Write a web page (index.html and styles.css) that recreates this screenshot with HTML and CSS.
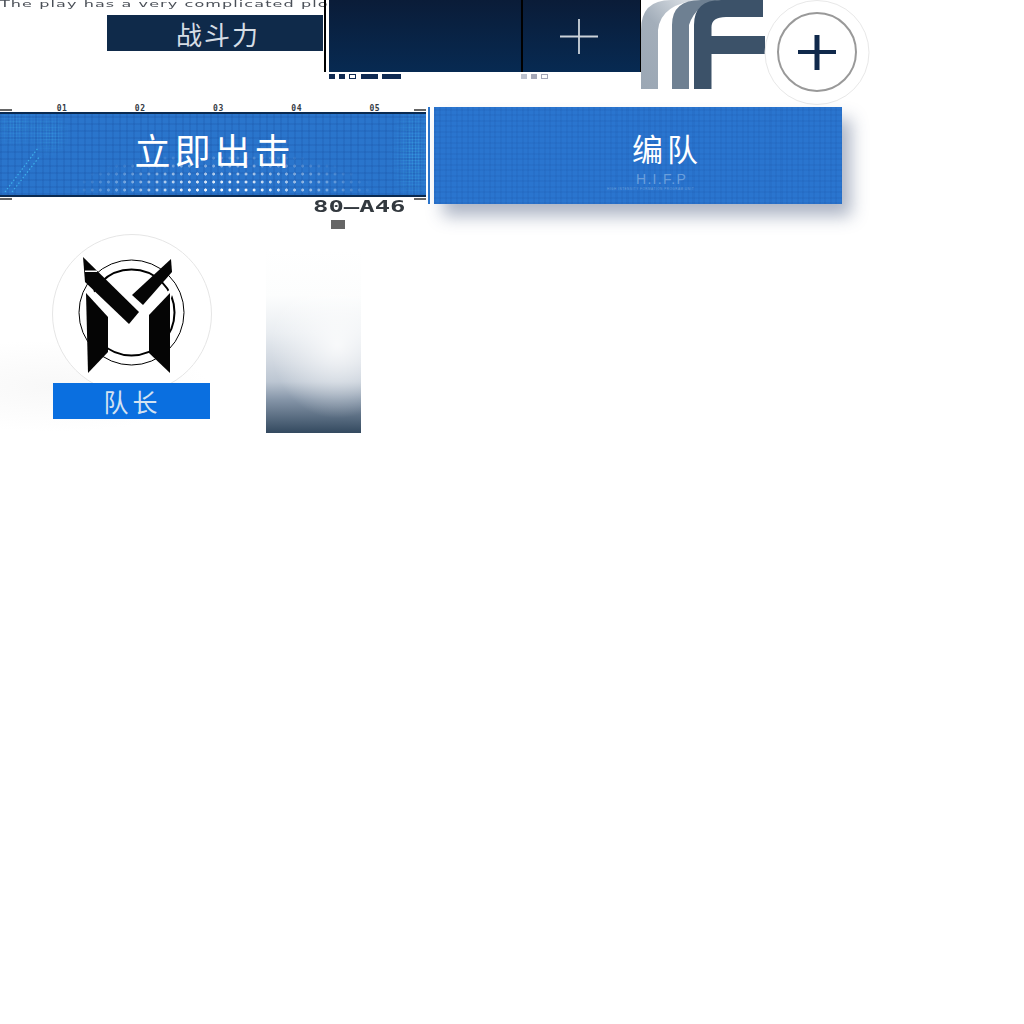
FILE: index.html
```html
<!DOCTYPE html>
<html lang="zh-CN">
<head>
  <meta charset="UTF-8">
  <title>HIFP UI sheet</title>
  <link rel="stylesheet" href="styles.css">
</head>
<body>
  <div class="sheet">
    <div class="tagline"><span>The play has a very complicated plo</span></div>

    <div class="power">战斗力</div>

    <div class="rule rule-a"></div>
    <div class="slots">
      <div class="slot slot-wide"></div>
      <div class="slot slot-add">
        <svg width="40" height="37" viewBox="0 0 40 37"><path d="M0 18.5H38M19 1V36" stroke="#ccd3da" stroke-width="1.8" fill="none"/></svg>
      </div>
    </div>

    <div class="pips pips-dark">
      <i></i><i></i><i class="hollow"></i><i class="bar-a"></i><i class="bar-b"></i>
    </div>
    <div class="pips pips-pale">
      <i></i><i class="mid"></i><i class="hollow"></i>
    </div>

    <svg class="logo-f" width="125" height="90" viewBox="0 0 125 90">
      <defs>
        <linearGradient id="fadeBand" x1="0" y1="1" x2="0.7" y2="0">
          <stop offset="0" stop-color="#9ba7b4"/>
          <stop offset="0.6" stop-color="#a3aeba"/>
          <stop offset="1" stop-color="#d4dae0"/>
        </linearGradient>
      </defs>
      <path d="M0 89V30Q0 0 30 0H60Q20 3 17 30V89Z" fill="url(#fadeBand)"/>
      <path d="M31 89V25Q31 0 60 0H80Q55 3 48 25V89Z" fill="#6e8092"/>
      <path d="M53 89V25Q53 0 80 0H122V17H85Q70 17 70.5 28V36H124V54H70.5V89Z" fill="#3c5269"/>
    </svg>

    <div class="add-round">
      <svg width="106" height="106" viewBox="0 0 106 106">
        <circle cx="53" cy="52.5" r="52" fill="#fff" stroke="#e8e8e8"/>
        <circle cx="53" cy="52" r="39" fill="none" stroke="#999" stroke-width="2"/>
        <path d="M34 52H72" stroke="#10294b" stroke-width="4" fill="none"/>
        <path d="M53 35V70" stroke="#10294b" stroke-width="5" fill="none"/>
      </svg>
    </div>

    <div class="ticks">
      <span>01</span><span>02</span><span>03</span><span>04</span><span>05</span>
    </div>
    <i class="dash dash-tl"></i><i class="dash dash-tr"></i>
    <i class="dash dash-bl"></i><i class="dash dash-br"></i>

    <div class="launch">
      <div class="launch-sparkle"></div>
      <svg class="launch-streak" width="40" height="50" viewBox="0 0 40 50">
        <path d="M3 48L36 4M10 48L38 12" stroke="#46c3f5" stroke-width="1.2" stroke-dasharray="1.5 2" opacity="0.75" fill="none"/>
      </svg>
      <div class="launch-dots"></div>
      <span class="launch-label">立即出击</span>
    </div>

    <div class="code">80–A46</div>
    <div class="code-mark"></div>

    <div class="rule rule-blue"></div>

    <div class="team">
      <span class="team-label">编队</span>
      <span class="team-sub">H.I.F.P</span>
      <span class="team-tiny">HIGH INTENSITY FORMATION PROGRAM UNIT</span>
    </div>

    <div class="smudge"></div>

    <div class="avatar">
      <svg width="162" height="162" viewBox="0 0 162 162">
        <circle cx="81" cy="81" r="79.5" fill="#fff" stroke="#e6e6e6"/>
        <circle cx="80.5" cy="79.5" r="52.5" fill="none" stroke="#000" stroke-width="1"/>
        <circle cx="80.5" cy="79.5" r="43" fill="none" stroke="#000" stroke-width="2"/>
        <path d="M36 52L70 84L52 118L36 52Z" fill="#fff"/>
        <path d="M124 52L92 80L104 118L124 52Z" fill="#fff"/>
        <path d="M32 24L88 79L78 91L34 49Z" fill="#050505"/>
        <path d="M34 37.5H46V39H34Z" fill="#fff"/>
        <path d="M120 26L121 39L92 72L81 62Z" fill="#050505"/>
        <path d="M35 60L57 84V119L37 140Z" fill="#050505"/>
        <path d="M119 60L98 82V120L119 140Z" fill="#050505"/>
      </svg>
    </div>
    <div class="captain">队长</div>

    <div class="fade-panel"></div>
  </div>
</body>
</html>
```

FILE: styles.css
```css
* {
  margin: 0;
  padding: 0;
  box-sizing: border-box;
}

body {
  background-color: #fff;
  font-family: "Noto Sans CJK SC", "Noto Sans", sans-serif;
}

/* sprite sheet: every piece sits at its own spot on the canvas */
.sheet {
  position: relative;
  width: 1024px;
  height: 1024px;
  overflow: hidden;
}

.tagline {
  position: absolute;
  left: 0;
  top: 0;
  height: 9px;
}

.tagline span {
  display: block;
  font-family: "DejaVu Sans", sans-serif;
  font-size: 8px;
  line-height: 9px;
  letter-spacing: 0.55px;
  color: #4a4f57;
  white-space: nowrap;
  transform: scaleX(2);
  transform-origin: left top;
}

.power {
  position: absolute;
  left: 107px;
  top: 15px;
  width: 216px;
  height: 36px;
  padding-left: 6px;
  background-color: #0f2a4a;
  color: #d5dde5;
  font-size: 26px;
  line-height: 37px;
  letter-spacing: 2px;
  text-align: center;
}

.rule {
  position: absolute;
}

.rule-a {
  left: 324px;
  top: 0;
  width: 2px;
  height: 72px;
  background-color: #000;
}

.rule-blue {
  left: 428px;
  top: 107px;
  width: 2px;
  height: 97px;
  background-color: #2a75cc;
}

.slots {
  position: absolute;
  left: 329px;
  top: 0;
  display: flex;
  width: 312px;
  height: 72px;
  border-right: 1.5px solid #000;
  background: linear-gradient(#0a1c38, #072a52);
}

.slot-wide {
  width: 194px;
  border-right: 2px solid #000;
}

.slot-add {
  flex: 1;
  display: flex;
  align-items: center;
  justify-content: center;
  padding-right: 3px;
}

.pips {
  position: absolute;
  top: 74px;
  display: flex;
  gap: 4px;
}

.pips i {
  display: block;
  width: 6px;
  height: 5px;
}

.pips .hollow {
  width: 7px;
  background: transparent;
}

.pips-dark {
  left: 329px;
}

.pips-dark i {
  background-color: #0f2a52;
}

.pips-dark .hollow {
  border: 1px solid #0f2a52;
  background: transparent;
}

.pips-dark .bar-a {
  width: 17px;
  margin-left: 1px;
}

.pips-dark .bar-b {
  width: 19px;
}

.pips-pale {
  left: 521px;
}

.pips-pale i {
  background-color: #bcc2ce;
}

.pips-pale .mid {
  background-color: #a5a8b8;
}

.pips-pale .hollow {
  border: 1px solid #a5a8b8;
  background: transparent;
}

.logo-f {
  position: absolute;
  left: 641px;
  top: 0;
}

.add-round {
  position: absolute;
  left: 764px;
  top: 0;
  line-height: 0;
}

.ticks {
  position: absolute;
  left: 23px;
  top: 104px;
  display: flex;
  width: 391px;
}

.ticks span {
  width: 78.2px;
  font-family: "DejaVu Sans Mono", monospace;
  font-size: 8px;
  font-weight: bold;
  line-height: 9px;
  letter-spacing: 0.6px;
  color: #333a44;
  text-align: center;
}

.dash {
  position: absolute;
  display: block;
  width: 12px;
  height: 2px;
  background-color: #666;
}

.dash-tl { left: 0; top: 109px; }
.dash-tr { left: 414px; top: 109px; }
.dash-bl { left: 0; top: 198px; }
.dash-br { left: 414px; top: 198px; }

.launch {
  position: absolute;
  left: 0;
  top: 112px;
  width: 426px;
  height: 85px;
  border-top: 2px solid #0a2a50;
  border-bottom: 2px solid #0a2a50;
  background-color: #2a75cc;
  background-image:
    repeating-linear-gradient(90deg, rgba(20, 70, 150, 0.16) 0 2px, transparent 2px 7px),
    repeating-linear-gradient(0deg, rgba(20, 70, 150, 0.16) 0 2px, transparent 2px 7px);
}

.launch-sparkle {
  position: absolute;
  inset: 0;
  opacity: 0.5;
  background-image: radial-gradient(circle, rgba(70, 195, 245, 0.85) 0.8px, transparent 1.2px);
  background-size: 3px 3px;
  -webkit-mask-image:
    radial-gradient(ellipse 30px 24px at 16px 12px, rgba(0, 0, 0, 0.7), transparent),
    radial-gradient(ellipse 22px 24px at 50px 20px, rgba(0, 0, 0, 0.8), transparent),
    radial-gradient(ellipse 24px 60px at 414px 40px, #000, transparent);
  mask-image:
    radial-gradient(ellipse 30px 24px at 16px 12px, rgba(0, 0, 0, 0.7), transparent),
    radial-gradient(ellipse 22px 24px at 50px 20px, rgba(0, 0, 0, 0.8), transparent),
    radial-gradient(ellipse 24px 60px at 414px 40px, #000, transparent);
}

.launch-streak {
  position: absolute;
  left: 2px;
  top: 30px;
}

.launch-dots {
  position: absolute;
  left: 70px;
  right: 50px;
  bottom: 0;
  height: 45px;
  background-image: radial-gradient(circle, rgba(255, 255, 255, 0.95) 1.3px, transparent 1.8px);
  background-size: 8.1px 8px;
  background-position: 2px 4px;
  -webkit-mask-image: radial-gradient(ellipse 50% 100% at 50% 100%, #000 20%, transparent 100%);
  mask-image: radial-gradient(ellipse 50% 100% at 50% 100%, #000 20%, transparent 100%);
}

.launch-label {
  position: absolute;
  left: 0;
  right: 0;
  top: 10px;
  padding-left: 3px;
  font-size: 36px;
  line-height: 50px;
  letter-spacing: 4px;
  color: #fff;
  text-align: center;
}

.code {
  position: absolute;
  left: 313px;
  top: 199px;
  font-family: "DejaVu Sans Mono", monospace;
  font-size: 16px;
  font-weight: bold;
  line-height: 16px;
  color: #33393f;
  transform: scaleX(1.6);
  transform-origin: left top;
  white-space: nowrap;
}

.code-mark {
  position: absolute;
  left: 331px;
  top: 220px;
  width: 14px;
  height: 9px;
  background-color: #666;
}

.team {
  position: absolute;
  left: 434px;
  top: 107px;
  width: 408px;
  height: 97px;
  background-color: #2a75cf;
  background-image:
    repeating-linear-gradient(90deg, rgba(20, 70, 150, 0.1) 0 2px, transparent 2px 5.5px),
    repeating-linear-gradient(0deg, rgba(20, 70, 150, 0.1) 0 2px, transparent 2px 5.5px);
  box-shadow: 9px 12px 16px rgba(50, 70, 110, 0.4);
  color: #fff;
  text-align: center;
}

.team-label {
  position: absolute;
  left: 198px;
  top: 18px;
  font-size: 31px;
  line-height: 46px;
  letter-spacing: 4px;
  white-space: nowrap;
}

.team-sub {
  position: absolute;
  left: 202px;
  top: 64px;
  font-family: "Liberation Sans", sans-serif;
  font-size: 14px;
  line-height: 16px;
  letter-spacing: 1.3px;
  color: #6a9fdc;
}

.team-tiny {
  position: absolute;
  left: 173px;
  top: 80px;
  font-family: "Liberation Sans", sans-serif;
  font-size: 3px;
  line-height: 4px;
  letter-spacing: 0.55px;
  color: #6a9fdc;
  white-space: nowrap;
}

.smudge {
  position: absolute;
  left: 0;
  top: 340px;
  width: 262px;
  height: 92px;
  background: radial-gradient(ellipse 60% 50% at 20% 50%, #f8f8f8, rgba(255, 255, 255, 0));
}

.avatar {
  position: absolute;
  left: 51px;
  top: 233px;
  line-height: 0;
}

.captain {
  position: absolute;
  left: 53px;
  top: 383px;
  width: 157px;
  height: 36px;
  padding-left: 2px;
  background-color: #0a6fe0;
  color: #d3e2f2;
  font-size: 25px;
  line-height: 36px;
  letter-spacing: 4px;
  text-align: center;
}

.fade-panel {
  position: absolute;
  left: 266px;
  top: 250px;
  width: 95px;
  height: 183px;
  background:
    radial-gradient(ellipse 70% 40% at 75% 52%, rgba(255, 255, 255, 0.8), rgba(255, 255, 255, 0)),
    linear-gradient(#fff 0, #fcfdfd 25%, #e9edf1 45%, #cfd6df 62%, #bcc6d2 72%, #8494a7 82%, #33495f 100%);
}
```
